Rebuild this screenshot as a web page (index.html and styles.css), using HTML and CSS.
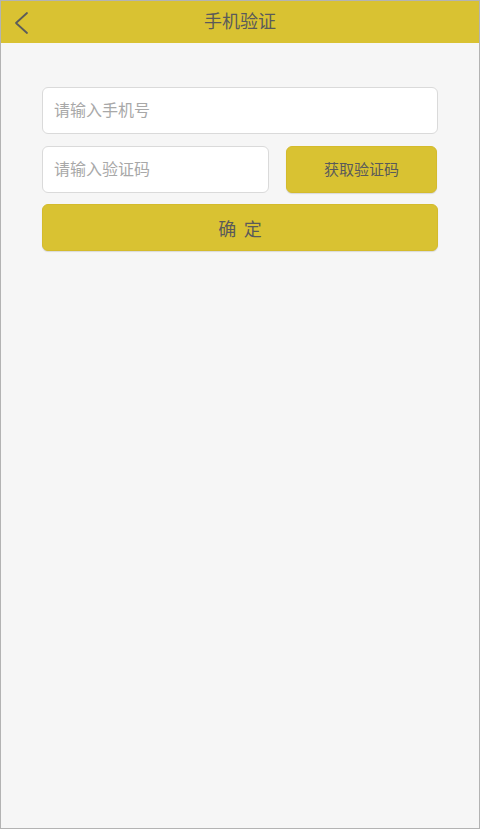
FILE: index.html
```html
<!DOCTYPE html>
<html lang="zh-CN">
<head>
<meta charset="utf-8">
<title>手机验证</title>
<link rel="stylesheet" href="styles.css">
</head>
<body>
<div class="frame">
  <header class="topbar">
    <a class="back" href="#" aria-label="返回">
      <svg width="16" height="24" viewBox="0 0 16 24"><path d="M14 2 L3 12 L14 22" fill="none" stroke="#5b5b5b" stroke-width="1.8" stroke-linecap="round" stroke-linejoin="round"/></svg>
    </a>
    <h1 class="title">手机验证</h1>
  </header>
  <main class="form">
    <input class="field" type="text" placeholder="请输入手机号">
    <div class="row">
      <input class="field code" type="text" placeholder="请输入验证码">
      <button class="btn get">获取验证码</button>
    </div>
    <button class="btn submit">确 定</button>
  </main>
</div>
</body>
</html>
```

FILE: styles.css
```css
* { box-sizing: border-box; }
html, body { margin: 0; padding: 0; }
body {
  font-family: Roboto, "Noto Sans CJK SC", sans-serif;
  background: #f6f6f6;
}
.frame {
  width: 480px;
  height: 829px;
  border: 1px solid #b3b3b3;
  background: #f6f6f6;
}
.topbar {
  position: relative;
  height: 42px;
  background: #d9c232;
  display: flex;
  align-items: center;
  justify-content: center;
}
.back {
  position: absolute;
  left: 12px;
  top: 10px;
  display: block;
  width: 16px;
  height: 24px;
}
.title {
  margin: 0;
  font-size: 18px;
  font-weight: normal;
  color: #5a5a5a;
  line-height: 44px;
}
.form {
  padding: 44px 41px 0 41px;
  display: flex;
  flex-direction: column;
}
.field {
  height: 47px;
  border: 1px solid #dadada;
  border-radius: 6px;
  background: #fff;
  padding: 0 11px;
  font-family: inherit;
  font-size: 16px;
  color: #333;
  outline: none;
}
.field::placeholder { color: #a8a8a8; }
.row {
  display: flex;
  gap: 17px;
  margin-top: 12px;
}
.code { width: 227px; }
.btn {
  border: 1px solid #d4bb2c;
  background: #d9c232;
  border-radius: 6px;
  font-family: inherit;
  color: #5a5a5a;
  box-shadow: 0 1px 1px rgba(0,0,0,0.12);
  cursor: pointer;
}
.get {
  width: 151px;
  height: 47px;
  font-size: 15px;
  padding: 0 0 3px 0;
}
.submit {
  margin-top: 11px;
  height: 47px;
  font-size: 18px;
  letter-spacing: 1.5px;
  padding: 0 0 0 1.5px;
}
```
